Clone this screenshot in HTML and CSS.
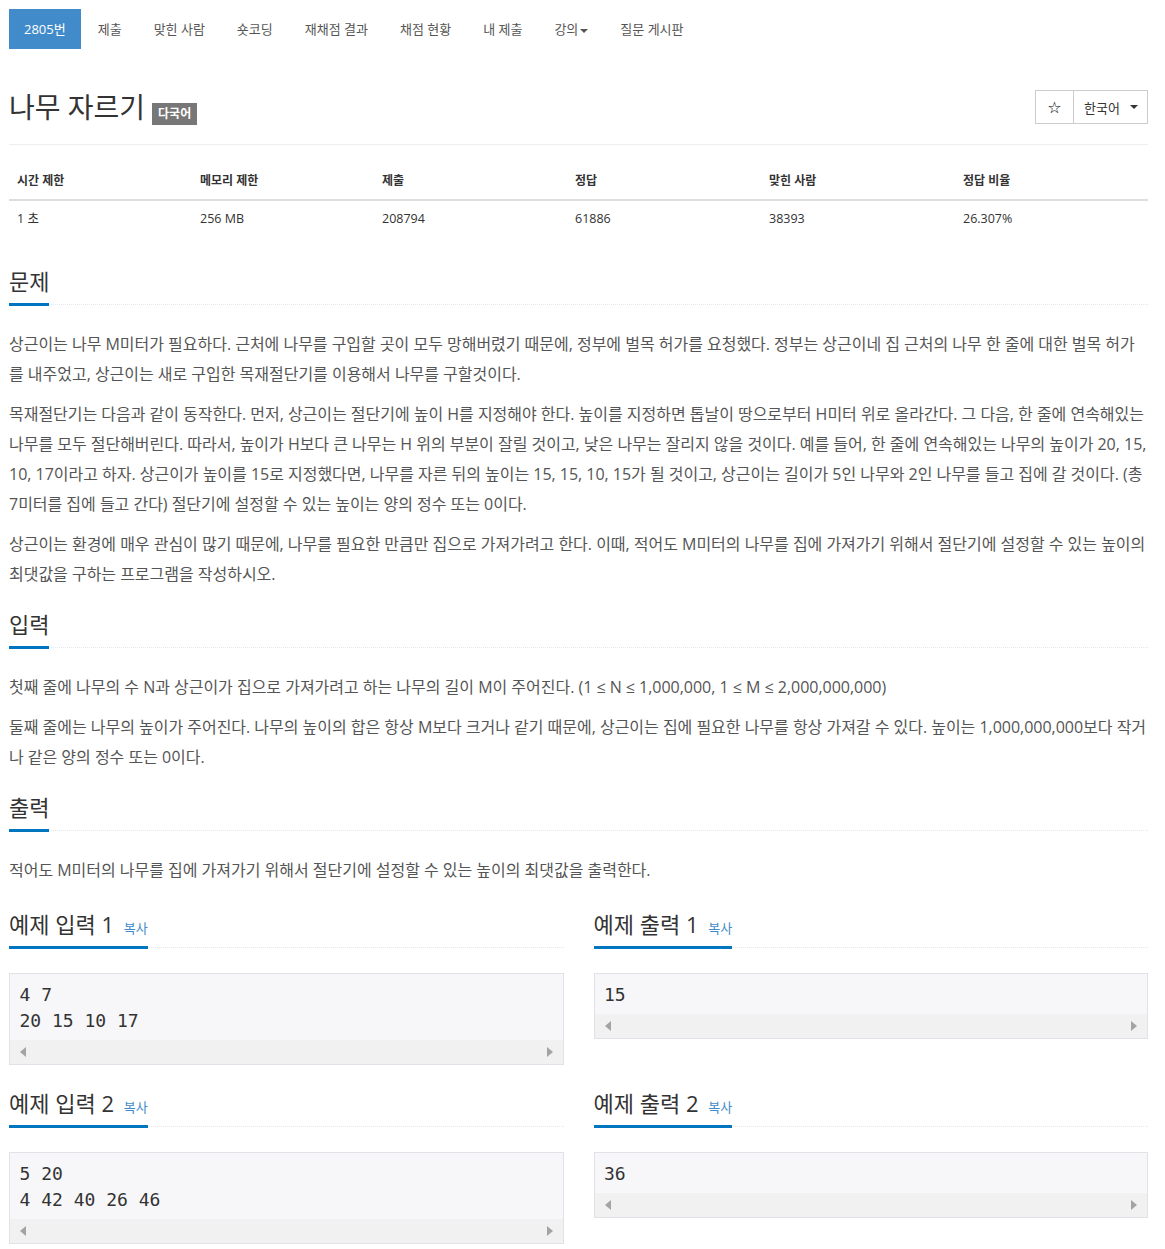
FILE: index.html
```html
<!DOCTYPE html>
<html lang="ko">
<head>
  <meta charset="UTF-8">
  <meta name="viewport" content="width=device-width, initial-scale=1.0">
  <title>2805번: 나무 자르기</title>
  <link rel="stylesheet" href="styles.css">
</head>
<body>
  <div class="container">
    <ul class="problem-menu">
      <li class="active"><a href="#">2805번</a></li>
      <li><a href="#">제출</a></li>
      <li><a href="#">맞힌 사람</a></li>
      <li><a href="#">숏코딩</a></li>
      <li><a href="#">재채점 결과</a></li>
      <li><a href="#">채점 현황</a></li>
      <li><a href="#">내 제출</a></li>
      <li><a href="#">강의<span class="caret"></span></a></li>
      <li><a href="#">질문 게시판</a></li>
    </ul>

    <div class="page-header">
      <h1 class="title-row">
        <span id="problem_title">나무 자르기</span>
        <span class="problem-label">다국어</span>
      </h1>
      <div class="btn-group">
        <button class="btn btn-star">&#9734;</button>
        <button class="btn btn-lang">한국어 <span class="caret"></span></button>
      </div>
    </div>

    <table id="problem-info">
      <thead>
        <tr>
          <th>시간 제한</th>
          <th>메모리 제한</th>
          <th>제출</th>
          <th>정답</th>
          <th>맞힌 사람</th>
          <th>정답 비율</th>
        </tr>
      </thead>
      <tbody>
        <tr>
          <td>1 초</td>
          <td>256 MB</td>
          <td>208794</td>
          <td>61886</td>
          <td>38393</td>
          <td>26.307%</td>
        </tr>
      </tbody>
    </table>

    <section class="problem-section">
      <div class="headline"><h2>문제</h2></div>
      <div class="problem-text">
        <p>상근이는 나무 M미터가 필요하다. 근처에 나무를 구입할 곳이 모두 망해버렸기 때문에, 정부에 벌목 허가를 요청했다. 정부는 상근이네 집 근처의 나무 한 줄에 대한 벌목 허가를 내주었고, 상근이는 새로 구입한 목재절단기를 이용해서 나무를 구할것이다.</p>
        <p>목재절단기는 다음과 같이 동작한다. 먼저, 상근이는 절단기에 높이 H를 지정해야 한다. 높이를 지정하면 톱날이 땅으로부터 H미터 위로 올라간다. 그 다음, 한 줄에 연속해있는 나무를 모두 절단해버린다. 따라서, 높이가 H보다 큰 나무는 H 위의 부분이 잘릴 것이고, 낮은 나무는 잘리지 않을 것이다. 예를 들어, 한 줄에 연속해있는 나무의 높이가 20, 15, 10, 17이라고 하자. 상근이가 높이를 15로 지정했다면, 나무를 자른 뒤의 높이는 15, 15, 10, 15가 될 것이고, 상근이는 길이가 5인 나무와 2인 나무를 들고 집에 갈 것이다. (총 7미터를 집에 들고 간다) 절단기에 설정할 수 있는 높이는 양의 정수 또는 0이다.</p>
        <p>상근이는 환경에 매우 관심이 많기 때문에, 나무를 필요한 만큼만 집으로 가져가려고 한다. 이때, 적어도 M미터의 나무를 집에 가져가기 위해서 절단기에 설정할 수 있는 높이의 최댓값을 구하는 프로그램을 작성하시오.</p>
      </div>
    </section>

    <section class="problem-section">
      <div class="headline"><h2>입력</h2></div>
      <div class="problem-text">
        <p>첫째 줄에 나무의 수 N과 상근이가 집으로 가져가려고 하는 나무의 길이 M이 주어진다. (1 ≤ N ≤ 1,000,000, 1 ≤ M ≤ 2,000,000,000)</p>
        <p>둘째 줄에는 나무의 높이가 주어진다. 나무의 높이의 합은 항상 M보다 크거나 같기 때문에, 상근이는 집에 필요한 나무를 항상 가져갈 수 있다. 높이는 1,000,000,000보다 작거나 같은 양의 정수 또는 0이다.</p>
      </div>
    </section>

    <section class="problem-section">
      <div class="headline"><h2>출력</h2></div>
      <div class="problem-text">
        <p>적어도 M미터의 나무를 집에 가져가기 위해서 절단기에 설정할 수 있는 높이의 최댓값을 출력한다.</p>
      </div>
    </section>

    <div class="sample-row">
      <section class="problem-section">
        <div class="headline"><h2>예제 입력 1 <a href="#" class="copy-button">복사</a></h2></div>
        <div class="sample-box">
          <pre class="sampledata">4 7
20 15 10 17</pre>
          <div class="fake-scroll"><span class="arrow-left"></span><span class="arrow-right"></span></div>
        </div>
      </section>
      <section class="problem-section">
        <div class="headline"><h2>예제 출력 1 <a href="#" class="copy-button">복사</a></h2></div>
        <div class="sample-box">
          <pre class="sampledata">15</pre>
          <div class="fake-scroll"><span class="arrow-left"></span><span class="arrow-right"></span></div>
        </div>
      </section>
    </div>

    <div class="sample-row">
      <section class="problem-section">
        <div class="headline"><h2>예제 입력 2 <a href="#" class="copy-button">복사</a></h2></div>
        <div class="sample-box">
          <pre class="sampledata">5 20
4 42 40 26 46</pre>
          <div class="fake-scroll"><span class="arrow-left"></span><span class="arrow-right"></span></div>
        </div>
      </section>
      <section class="problem-section">
        <div class="headline"><h2>예제 출력 2 <a href="#" class="copy-button">복사</a></h2></div>
        <div class="sample-box">
          <pre class="sampledata">36</pre>
          <div class="fake-scroll"><span class="arrow-left"></span><span class="arrow-right"></span></div>
        </div>
      </section>
    </div>
  </div>
</body>
</html>
```

FILE: styles.css
```css
* {
  margin: 0;
  padding: 0;
  box-sizing: border-box;
}

body {
  font-family: 'Open Sans', 'Noto Sans CJK KR', sans-serif;
  font-size: 13px;
  color: #333;
  background-color: #fff;
}

a {
  text-decoration: none;
}

.container {
  width: 1139px;
  margin-left: 9px;
  padding-top: 9px;
}

/* problem menu */
.problem-menu {
  display: flex;
  gap: 2px;
  list-style: none;
}

.problem-menu a {
  display: block;
  padding: 10px 15px;
  line-height: 20px;
  font-size: 13px;
  color: #555;
}

.problem-menu .active a {
  background-color: #428bca;
  color: #fff;
}

.caret {
  display: inline-block;
  width: 0;
  height: 0;
  margin-left: 2px;
  vertical-align: middle;
  border-top: 4px solid;
  border-left: 4px solid transparent;
  border-right: 4px solid transparent;
}

/* header */
.page-header {
  display: flex;
  justify-content: space-between;
  align-items: center;
  margin-top: 41px;
  padding-bottom: 20px;
  border-bottom: 1px solid #eee;
}

.title-row {
  display: flex;
  align-items: flex-end;
  gap: 7px;
  font-size: 28px;
  line-height: 34px;
  font-weight: 400;
  color: #333;
}

.problem-label {
  font-size: 12px;
  line-height: 14px;
  font-weight: 700;
  padding: 4px 6px;
  margin-bottom: -1px;
  background-color: #777;
  color: #fff;
}

.btn-group {
  display: flex;
}

.btn {
  height: 34px;
  background-color: #fff;
  border: 1px solid #ccc;
  color: #333;
  font-family: 'Open Sans', 'Noto Sans CJK KR', sans-serif;
  font-size: 13px;
  cursor: pointer;
}

.btn-star {
  width: 39px;
  font-family: 'DejaVu Sans', sans-serif;
  font-size: 16px;
  color: #000;
}

.btn-lang {
  width: 75px;
  margin-left: -1px;
  padding: 0 9px 0 10px;
  display: flex;
  align-items: center;
  justify-content: space-between;
}

/* info table */
#problem-info {
  width: 100%;
  border-collapse: collapse;
  margin-top: 18px;
  margin-bottom: 34px;
}

#problem-info th,
#problem-info td {
  padding: 8px;
  line-height: 20px;
  text-align: left;
}

#problem-info th {
  font-size: 12px;
  font-weight: 700;
  border-bottom: 2px solid #ddd;
}

#problem-info td {
  font-size: 12.5px;
}

#problem-info th:nth-child(1) { width: 183px; }
#problem-info th:nth-child(2) { width: 182px; }
#problem-info th:nth-child(3) { width: 193px; }
#problem-info th:nth-child(4) { width: 194px; }
#problem-info th:nth-child(5) { width: 194px; }

/* sections */
.headline {
  margin: 25px 0 24px;
  border-bottom: 1px dotted #e4e9f0;
}

.headline h2 {
  display: inline-block;
  margin-bottom: -2px;
  padding-bottom: 12px;
  border-bottom: 3px solid #0076c0;
  font-size: 22px;
  line-height: 20px;
  font-weight: 400;
  color: #333;
}

.copy-button {
  font-size: 13px;
  line-height: 10px;
  color: #428bca;
  margin-left: 4px;
}

.problem-text p {
  font-size: 16px;
  line-height: 30px;
  letter-spacing: -0.02px;
  color: #555;
  margin-bottom: 10px;
}

/* samples */
.sample-row {
  display: grid;
  grid-template-columns: 1fr 1fr;
  column-gap: 30px;
  align-items: start;
}

.sample-row .headline {
  margin: 19px 0 25px;
}

.sample-box {
  background-color: #f7f7f9;
  border: 1px solid #e1e1e8;
  margin-bottom: 9px;
}

.sampledata {
  font-family: 'DejaVu Sans Mono', monospace;
  font-size: 18px;
  line-height: 26px;
  color: #333;
  padding: 8px 9.5px 6px;
}

.fake-scroll {
  height: 24px;
  background-color: #f1f1f1;
  display: flex;
  justify-content: space-between;
  align-items: center;
  padding: 0 10px;
}

.arrow-left,
.arrow-right {
  width: 0;
  height: 0;
  border-top: 5px solid transparent;
  border-bottom: 5px solid transparent;
}

.arrow-left {
  border-right: 6px solid #a3a3a3;
}

.arrow-right {
  border-left: 6px solid #a3a3a3;
}
```
